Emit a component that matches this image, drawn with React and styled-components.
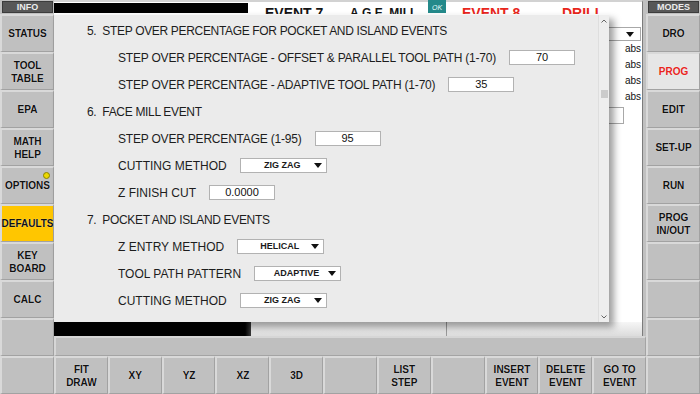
import React from 'react';
import styled, { createGlobalStyle } from 'styled-components';

const GlobalStyle = createGlobalStyle`
  html, body {
    margin: 0;
    padding: 0;
    background: #c0c0c0;
  }
  body {
    font-family: "Liberation Sans", Arial, sans-serif;
  }
`;

const Screen = styled.div`
  width: 700px;
  height: 394px;
  display: flex;
  background: #c0c0c0;
  overflow: hidden;
`;

const SideColumn = styled.div`
  width: 54px;
  flex-shrink: 0;
  display: flex;
  flex-direction: column;
`;

const ColumnHeader = styled.div`
  box-sizing: border-box;
  height: 12px;
  margin: 1px 1px 1px 2px;
  background: #575757;
  border: 1px solid #3c3c3c;
  color: #ececec;
  font: bold 9px/10px "Liberation Sans", Arial, sans-serif;
  text-align: center;
`;

const PanelButton = styled.div`
  position: relative;
  box-sizing: border-box;
  height: 38px;
  flex-shrink: 0;
  display: flex;
  align-items: center;
  justify-content: center;
  text-align: center;
  background: ${(p) => p.$bg || '#c0c0c0'};
  color: ${(p) => p.$color || '#111'};
  border-top: 2px solid #d9d9d9;
  border-left: 2px solid #d9d9d9;
  border-right: 1px solid #a2a2a2;
  border-bottom: 1px solid #a2a2a2;
  font: bold 10px/13px "Liberation Sans", Arial, sans-serif;
  text-shadow: 0 0 1px rgba(255, 255, 255, 0.8);
  white-space: pre;
`;

const StatusDot = styled.span`
  position: absolute;
  top: 4px;
  right: 3px;
  width: 5px;
  height: 5px;
  border-radius: 50%;
  background: #ecd800;
  border: 1px solid #8a8200;
`;

const Center = styled.div`
  flex: 1;
  display: flex;
  flex-direction: column;
`;

const MainScreen = styled.div`
  position: relative;
  box-sizing: border-box;
  height: 336px;
  margin-right: 3px;
  background: #ffffff;
  border-top: 2px solid #d2d2d2;
  border-right: 1px solid #7c7c7c;
  display: flex;
  flex-direction: column;
`;

const TopRow = styled.div`
  height: 22px;
  display: flex;
  align-items: flex-start;
`;

const BlackBar = styled.div`
  width: 194px;
  height: 10px;
  margin-top: 1px;
  background: #000;
`;

const EventLabel = styled.div`
  width: ${(p) => p.$w}px;
  margin-left: ${(p) => p.$ml || 0}px;
  margin-top: 3px;
  color: ${(p) => p.$color || '#151515'};
  font: bold ${(p) => p.$size || 14}px/16px "Liberation Sans", Arial, sans-serif;
  white-space: nowrap;
  overflow: hidden;
`;

const OkBadge = styled.div`
  width: 18px;
  height: 13px;
  margin-right: 16px;
  margin-top: -2px;
  background: #24898a;
  color: #e8ffff;
  font: italic 7px/15px "Liberation Sans", Arial, sans-serif;
  text-align: center;
`;

const ContentArea = styled.div`
  flex: 1;
  display: flex;
  justify-content: flex-end;
`;

const SidePanel = styled.div`
  width: 44px;
  display: flex;
  flex-direction: column;
  align-items: flex-end;
`;

const SideSelect = styled.div`
  box-sizing: border-box;
  width: 44px;
  height: 14px;
  margin: 3px 1px 0 0;
  border: 1px solid #a8a8a8;
  display: flex;
  align-items: center;
  justify-content: flex-end;
  padding-right: 2px;
`;

const AbsLabel = styled.div`
  height: 16px;
  margin-right: 1px;
  font: 10px/16px "Liberation Sans", Arial, sans-serif;
  color: #111;
  &:first-of-type {
    margin-top: 4px;
  }
`;

const SideInput = styled.div`
  box-sizing: border-box;
  width: 44px;
  height: 17px;
  margin: 2px 18px 0 0;
  border: 1px solid #a8a8a8;
`;

const StatusBar = styled.div`
  height: 14px;
  display: flex;
`;

const ProgressBlack = styled.div`
  width: 197px;
  background: linear-gradient(90deg, #000 0%, #000 97%, #3a3a3a 100%);
`;

const ProgressTrack = styled.div`
  flex: 1;
  display: flex;
  background: linear-gradient(#f6f6f6, #dcdcdc);
`;

const ProgressSegment = styled.div`
  width: 195px;
  border-right: 1px solid #9a9a9a;
`;

const Dialog = styled.div`
  position: absolute;
  left: 0;
  top: 12px;
  width: 555px;
  height: 308px;
  box-sizing: border-box;
  display: flex;
  background: #ebebeb;
  border-top: 1px solid #f7f7f7;
  box-shadow: 5px 5px 7px rgba(0, 0, 0, 0.38);
`;

const DialogBody = styled.div`
  flex: 1;
  padding: 2px 0 0 33px;
  overflow: hidden;
  color: #1d1d1d;
  font: 12px/14px "Liberation Sans", Arial, sans-serif;
`;

const SectionTitle = styled.div`
  height: 27px;
  display: flex;
  align-items: center;
  white-space: pre;
  letter-spacing: -0.33px;
`;

const FieldRow = styled.div`
  height: 27px;
  display: flex;
  align-items: center;
  gap: 13px;
  padding-left: 31px;
  white-space: nowrap;
`;

const FieldLabel = styled.span`
  letter-spacing: ${(p) => (p.$tight ? '-0.2px' : '0')};
`;

const ValueBox = styled.div`
  box-sizing: border-box;
  width: 66px;
  height: 15px;
  background: #fff;
  border: 1px solid #b2b2b2;
  font: 11px/13px "Liberation Sans", Arial, sans-serif;
  color: #111;
  text-align: center;
`;

const DropBox = styled.div`
  box-sizing: border-box;
  width: 87px;
  height: 15px;
  display: flex;
  align-items: center;
  background: #fff;
  border: 1px solid #b2b2b2;
`;

const DropText = styled.span`
  flex: 1;
  padding-left: 10px;
  text-align: center;
  font: bold 9px/13px "Liberation Sans", Arial, sans-serif;
  color: #1a1a1a;
`;

const Caret = styled.svg`
  width: 8px;
  height: 5px;
  margin-right: 4px;
  flex-shrink: 0;
`;

const ScrollTrack = styled.div`
  width: 10px;
  display: flex;
  flex-direction: column;
  align-items: center;
  background: #eeeeee;
  border-left: 1px solid #dedede;
`;

const ScrollArrow = styled.svg`
  width: 6px;
  height: 4px;
  margin: ${(p) => (p.$down ? 'auto 0 3px' : '4px 0 0')};
`;

const ScrollThumb = styled.div`
  width: 7px;
  height: 8px;
  margin-top: 67px;
  background: #cbcbcb;
`;

const GrayStrip = styled.div`
  box-sizing: border-box;
  height: 20px;
  border-top: 2px solid #d6d6d6;
  border-left: 2px solid #d6d6d6;
  border-right: 1px solid #a4a4a4;
  border-bottom: 1px solid #a4a4a4;
  background: #bfbfbf;
`;

const BottomBar = styled.div`
  height: 38px;
  display: grid;
  grid-template-columns: repeat(11, 1fr);
`;

const leftButtons = [
  { label: 'STATUS' },
  { label: 'TOOL\nTABLE' },
  { label: 'EPA' },
  { label: 'MATH\nHELP' },
  { label: 'OPTIONS', dot: true },
  { label: 'DEFAULTS', bg: '#ffc600' },
  { label: 'KEY\nBOARD' },
  { label: 'CALC' },
  { label: '' },
  { label: '' },
];

const rightButtons = [
  { label: 'DRO' },
  { label: 'PROG', bg: '#e6e6e6', color: '#e8241c' },
  { label: 'EDIT' },
  { label: 'SET-UP' },
  { label: 'RUN' },
  { label: 'PROG\nIN/OUT' },
  { label: '' },
  { label: '' },
  { label: '' },
  { label: '' },
];

const bottomButtons = [
  'FIT\nDRAW', 'XY', 'YZ', 'XZ', '3D', '', 'LIST\nSTEP', '',
  'INSERT\nEVENT', 'DELETE\nEVENT', 'GO TO\nEVENT',
];

const rows = [
  { type: 'title', text: '5.  STEP OVER PERCENTAGE FOR POCKET AND ISLAND EVENTS' },
  { type: 'value', text: 'STEP OVER PERCENTAGE - OFFSET & PARALLEL TOOL PATH (1-70)', value: '70' },
  { type: 'value', text: 'STEP OVER PERCENTAGE - ADAPTIVE TOOL PATH (1-70)', value: '35' },
  { type: 'title', text: '6.  FACE MILL EVENT' },
  { type: 'value', text: 'STEP OVER PERCENTAGE (1-95)', value: '95' },
  { type: 'drop', text: 'CUTTING METHOD', value: 'ZIG ZAG' },
  { type: 'value', text: 'Z FINISH CUT', value: '0.0000' },
  { type: 'title', text: '7.  POCKET AND ISLAND EVENTS' },
  { type: 'drop', text: 'Z ENTRY METHOD', value: 'HELICAL' },
  { type: 'drop', text: 'TOOL PATH PATTERN', value: 'ADAPTIVE' },
  { type: 'drop', text: 'CUTTING METHOD', value: 'ZIG ZAG' },
];

const DownCaret = () => (
  <Caret viewBox="0 0 8 5">
    <path d="M0 0 H8 L4 5 Z" fill="#111" />
  </Caret>
);

const SettingRow = ({ row }) => {
  if (row.type === 'title') return <SectionTitle>{row.text}</SectionTitle>;
  return (
    <FieldRow>
      <FieldLabel $tight={row.text.includes('(')}>{row.text}</FieldLabel>
      {row.type === 'value' ? (
        <ValueBox>{row.value}</ValueBox>
      ) : (
        <DropBox>
          <DropText>{row.value}</DropText>
          <DownCaret />
        </DropBox>
      )}
    </FieldRow>
  );
};

export default function App() {
  return (
    <>
      <GlobalStyle />
      <Screen>
        <SideColumn>
          <ColumnHeader>INFO</ColumnHeader>
          {leftButtons.map((b, i) => (
            <PanelButton key={i} $bg={b.bg}>
              {b.label}
              {b.dot && <StatusDot />}
            </PanelButton>
          ))}
        </SideColumn>

        <Center>
          <MainScreen>
            <TopRow>
              <BlackBar />
              <EventLabel $w={85} $ml={17}>EVENT 7</EventLabel>
              <EventLabel $w={78} $size={12}>A.G.E. MILL</EventLabel>
              <OkBadge>OK</OkBadge>
              <EventLabel $w={100} $color="#e8261c">EVENT 8</EventLabel>
              <EventLabel $w={60} $color="#e8261c">DRILL</EventLabel>
            </TopRow>
            <ContentArea>
              <SidePanel>
                <SideSelect>
                  <DownCaret />
                </SideSelect>
                <AbsLabel>abs</AbsLabel>
                <AbsLabel>abs</AbsLabel>
                <AbsLabel>abs</AbsLabel>
                <AbsLabel>abs</AbsLabel>
                <SideInput />
              </SidePanel>
            </ContentArea>
            <StatusBar>
              <ProgressBlack />
              <ProgressTrack>
                <ProgressSegment />
              </ProgressTrack>
            </StatusBar>

            <Dialog>
              <DialogBody>
                {rows.map((r, i) => (
                  <SettingRow key={i} row={r} />
                ))}
              </DialogBody>
              <ScrollTrack>
                <ScrollArrow viewBox="0 0 6 4">
                  <path d="M0.5 3.5 L3 1 L5.5 3.5" fill="none" stroke="#666" strokeWidth="1" />
                </ScrollArrow>
                <ScrollThumb />
                <ScrollArrow $down viewBox="0 0 6 4">
                  <path d="M0.5 0.5 L3 3 L5.5 0.5" fill="none" stroke="#666" strokeWidth="1" />
                </ScrollArrow>
              </ScrollTrack>
            </Dialog>
          </MainScreen>
          <GrayStrip />
          <BottomBar>
            {bottomButtons.map((label, i) => (
              <PanelButton key={i}>{label}</PanelButton>
            ))}
          </BottomBar>
        </Center>

        <SideColumn>
          <ColumnHeader>MODES</ColumnHeader>
          {rightButtons.map((b, i) => (
            <PanelButton key={i} $bg={b.bg} $color={b.color}>
              {b.label}
            </PanelButton>
          ))}
        </SideColumn>
      </Screen>
    </>
  );
}
